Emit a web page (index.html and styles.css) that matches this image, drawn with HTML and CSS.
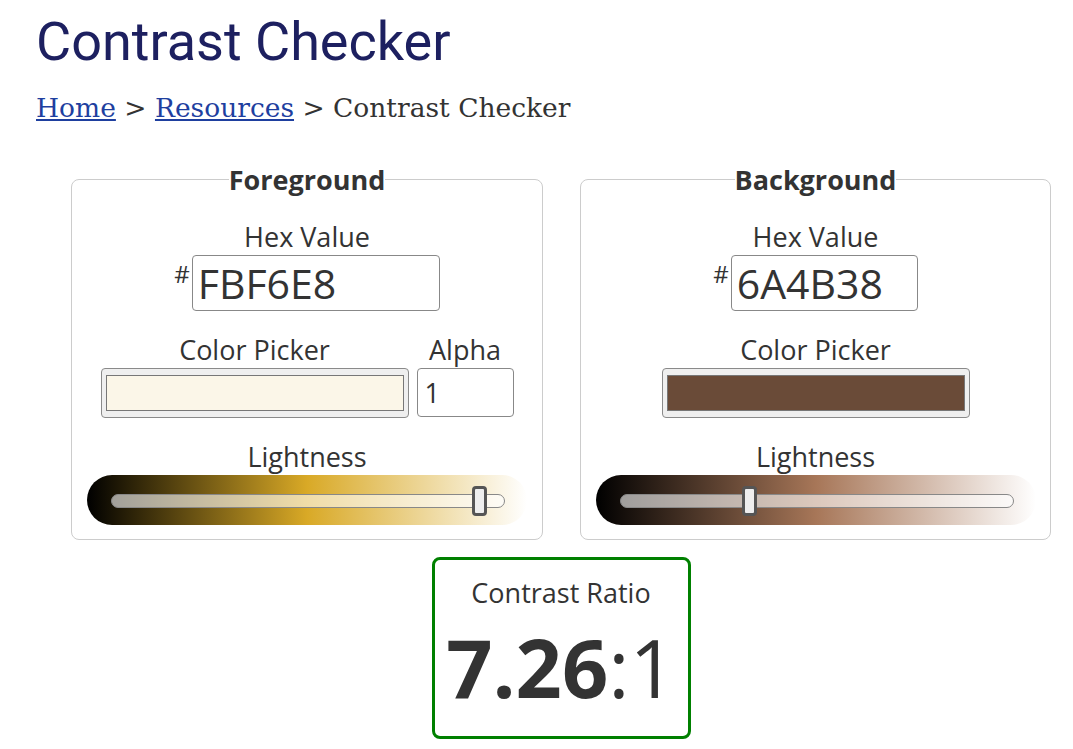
FILE: index.html
```html
<!DOCTYPE html>
<html lang="en">
<head>
<meta charset="utf-8">
<title>Contrast Checker</title>
<link rel="stylesheet" href="styles.css">
</head>
<body>
<div class="page">
  <h1 class="title">Contrast Checker</h1>
  <nav class="crumbs"><a href="#">Home</a> &gt; <a href="#">Resources</a> &gt; Contrast Checker</nav>

  <div class="checker">
    <div class="panels">
      <fieldset class="panel">
        <legend class="legend">Foreground</legend>
        <div class="label">Hex Value</div>
        <div class="hex-row">
          <span class="hash">#</span>
          <input class="hex-input hex-fg" type="text" value="FBF6E8">
        </div>
        <div class="picker-row">
          <div class="picker-col">
            <div class="label">Color Picker</div>
            <div class="picker"><div class="swatch swatch-fg"></div></div>
          </div>
          <div class="alpha-col">
            <div class="label">Alpha</div>
            <input class="alpha-input" type="text" value="1">
          </div>
        </div>
        <div class="label">Lightness</div>
        <div class="slider slider-fg">
          <div class="track"></div>
          <div class="thumb" style="left: 385px"></div>
        </div>
      </fieldset>

      <fieldset class="panel">
        <legend class="legend">Background</legend>
        <div class="label">Hex Value</div>
        <div class="hex-row">
          <span class="hash">#</span>
          <input class="hex-input hex-bg" type="text" value="6A4B38">
        </div>
        <div class="picker-row">
          <div class="picker-col">
            <div class="label">Color Picker</div>
            <div class="picker"><div class="swatch swatch-bg"></div></div>
          </div>
        </div>
        <div class="label">Lightness</div>
        <div class="slider slider-bg">
          <div class="track"></div>
          <div class="thumb" style="left: 146px"></div>
        </div>
      </fieldset>
    </div>

    <div class="ratio">
      <div class="ratio-label">Contrast Ratio</div>
      <div class="ratio-value"><b>7.26</b>:1</div>
    </div>
  </div>
</div>
</body>
</html>
```

FILE: styles.css
```css
html, body {
  margin: 0;
  padding: 0;
  background: #fff;
}

.page {
  padding: 10px 0 0 36px;
  font-family: "Open Sans", "Liberation Sans", sans-serif;
  color: #333;
}

.title {
  margin: 0;
  font-family: Roboto, "Liberation Sans", sans-serif;
  font-weight: 400;
  font-size: 54px;
  line-height: normal;
  color: #1d2060;
}

.crumbs {
  margin-top: 19px;
  font-family: "DejaVu Serif", "Liberation Serif", serif;
  font-size: 26.5px;
  color: #333;
}

.crumbs a {
  color: #1e3f9f;
  text-decoration: underline;
}

.checker {
  width: 980px;
  margin: 38px 0 0 35px;
}

.panels {
  display: grid;
  grid-template-columns: 472px 471px;
  column-gap: 37px;
}

.panel {
  margin: 0;
  min-width: 0;
  border: 1px solid #ccc;
  border-radius: 8px;
  padding: 20px 0 14px;
  display: flex;
  flex-direction: column;
  align-items: center;
}

.legend {
  margin: 0 auto;
  padding: 0;
  font-size: 27px;
  font-weight: 700;
  line-height: normal;
  color: #333;
}

.label {
  font-size: 27px;
  line-height: normal;
  text-align: center;
  color: #333;
}

.hex-row {
  display: flex;
  align-items: flex-start;
  justify-content: center;
}

.hash {
  font-size: 24px;
  line-height: normal;
  margin-top: 2px;
  margin-right: 2px;
}

.hex-input {
  box-sizing: border-box;
  height: 56px;
  margin: 0;
  padding: 0 5px;
  border: 1px solid #888;
  border-radius: 4px;
  font-family: "Open Sans", "Liberation Sans", sans-serif;
  font-size: 41px;
  color: #333;
  background: #fff;
  outline: none;
}

.hex-fg { width: 248px; }
.hex-bg { width: 187px; }

.picker-row {
  margin-top: 20px;
  display: flex;
  justify-content: center;
  align-items: flex-end;
  gap: 8px;
}

.picker-col {
  width: 308px;
  display: flex;
  flex-direction: column;
}

.picker {
  box-sizing: border-box;
  height: 50px;
  padding: 6px 4px;
  background: #efefef;
  border: 1px solid #8a8a8a;
  border-radius: 4px;
}

.swatch {
  box-sizing: border-box;
  height: 100%;
  border: 1px solid #777;
}

.swatch-fg { background: #fbf6e8; }
.swatch-bg { background: #6a4b38; }

.alpha-col {
  width: 97px;
  display: flex;
  flex-direction: column;
}

.alpha-input {
  box-sizing: border-box;
  width: 97px;
  height: 49px;
  margin: 0 0 1px;
  padding: 0 7px;
  border: 1px solid #888;
  border-radius: 4px;
  font-family: "Open Sans", "Liberation Sans", sans-serif;
  font-size: 27px;
  color: #333;
  background: #fff;
  outline: none;
}

.picker-row + .label {
  margin-top: 20px;
}

.slider {
  position: relative;
  width: 440px;
  height: 50px;
  border-radius: 25px;
  padding-top: 19px;
  box-sizing: border-box;
}

.slider-fg {
  background: linear-gradient(to right, #000, hsl(44, 70%, 50%), #fff);
}

.slider-bg {
  background: linear-gradient(to right, #000, hsl(23, 31%, 50%), #fff);
}

.track {
  box-sizing: border-box;
  height: 14px;
  margin: 0 22px 0 24px;
  border: 1px solid #888;
  border-radius: 7px;
  background: rgba(255, 255, 255, 0.6);
}

.thumb {
  position: absolute;
  top: 11px;
  box-sizing: border-box;
  width: 15px;
  height: 30px;
  border: 3px solid #555;
  border-radius: 4px;
  background: #eee;
}

.ratio {
  box-sizing: border-box;
  width: 259px;
  margin: 17px auto 0;
  padding: 14px 0;
  border: 3px solid #008000;
  border-radius: 8px;
  text-align: center;
}

.ratio-label {
  font-size: 27px;
  line-height: normal;
}

.ratio-value {
  font-size: 81px;
  line-height: normal;
  font-weight: 400;
}

.ratio-value b {
  font-weight: 700;
}
```
